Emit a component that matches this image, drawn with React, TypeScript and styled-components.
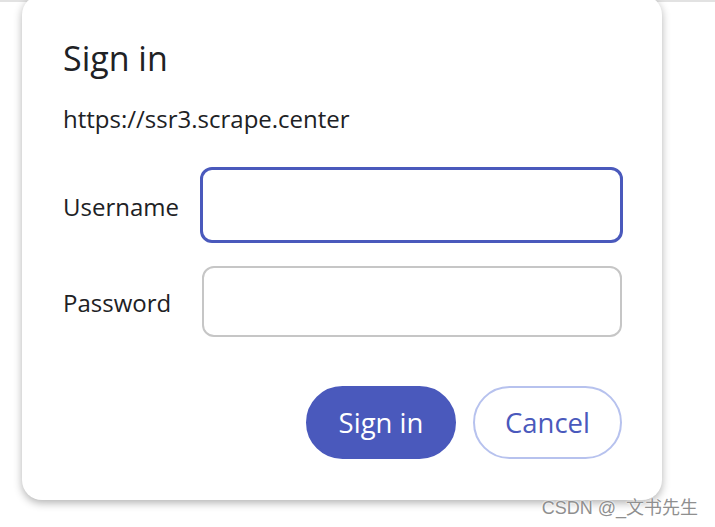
import styled, {createGlobalStyle} from 'styled-components';

const GlobalStyle = createGlobalStyle`
  html, body {
    margin: 0;
    padding: 0;
    background: #ffffff;
  }
  body {
    font-family: 'Open Sans', 'Noto Sans', sans-serif;
    color: #202124;
    overflow: hidden;
  }
`;

const primary = '#4a59bc';

const Page = styled.div`
  position: relative;
  width: 715px;
  height: 527px;
  border-top: 2px solid #e2e2e2;
  box-sizing: border-box;
`;

const Dialog = styled.div`
  margin: -7px 0 0 22px;
  width: 640px;
  box-sizing: border-box;
  padding: 41px 40px 41px 41px;
  background: #ffffff;
  border-radius: 20px;
  box-shadow: 0 3px 8px rgba(0, 0, 0, 0.3);
`;

const Title = styled.h1`
  margin: 0;
  font-size: 34px;
  font-weight: 400;
  line-height: 44px;
`;

const Origin = styled.div`
  margin-top: 23px;
  font-size: 24px;
  line-height: 32px;
`;

const Form = styled.div`
  margin-top: 32px;
  display: grid;
  grid-template-columns: 139px 1fr;
  row-gap: 23px;
  align-items: center;
`;

const Label = styled.label<{shift?: number}>`
  font-size: 24px;
  line-height: 32px;
  position: relative;
  top: ${(p) => p.shift ?? 0}px;
`;

const Field = styled.input<{focused?: boolean}>`
  box-sizing: border-box;
  height: ${(p) => (p.focused ? 76 : 71)}px;
  width: ${(p) => (p.focused ? 'calc(100% + 3px)' : '100%')};
  margin: ${(p) => (p.focused ? '0 -1px 0 -2px' : '0')};
  border: ${(p) => (p.focused ? `3px solid ${primary}` : '2px solid #c6c6c6')};
  border-radius: 12px;
  background: #ffffff;
  outline: none;
  font: inherit;
  font-size: 22px;
  padding: 0 16px;
`;

const Actions = styled.div`
  margin-top: 49px;
  display: flex;
  justify-content: flex-end;
  gap: 17px;
`;

const Button = styled.button<{primary?: boolean}>`
  box-sizing: border-box;
  height: 73px;
  width: ${(p) => (p.primary ? 150 : 149)}px;
  border-radius: 37px;
  font-family: inherit;
  font-size: 27.5px;
  cursor: pointer;
  background: ${(p) => (p.primary ? primary : '#ffffff')};
  color: ${(p) => (p.primary ? '#ffffff' : primary)};
  border: 2px solid ${(p) => (p.primary ? primary : '#b7c2ee')};
`;

const Watermark = styled.div`
  position: absolute;
  right: 17px;
  bottom: 8px;
  font-family: 'Liberation Sans', 'Noto Sans CJK SC', sans-serif;
  font-size: 18px;
  color: #8f8f8f;
  text-shadow: 0 0 2px #ffffff, 0 0 2px #ffffff;
`;

export default function App() {
  return (
    <Page>
      <GlobalStyle />
      <Dialog>
        <Title>Sign in</Title>
        <Origin>https://ssr3.scrape.center</Origin>
        <Form>
          <Label htmlFor="username" shift={2}>Username</Label>
          <Field id="username" focused />
          <Label htmlFor="password" shift={1}>Password</Label>
          <Field id="password" type="password" />
        </Form>
        <Actions>
          <Button primary>Sign in</Button>
          <Button>Cancel</Button>
        </Actions>
      </Dialog>
      <Watermark>CSDN @_文书先生</Watermark>
    </Page>
  );
}
